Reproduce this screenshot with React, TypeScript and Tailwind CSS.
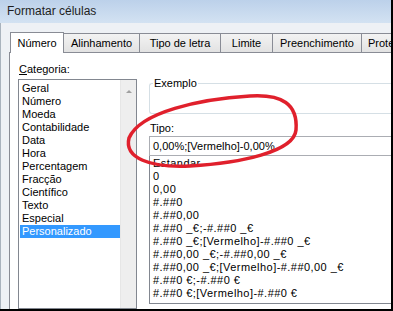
import React from "react";

const categories = [
  "Geral",
  "Número",
  "Moeda",
  "Contabilidade",
  "Data",
  "Hora",
  "Percentagem",
  "Fracção",
  "Científico",
  "Texto",
  "Especial",
  "Personalizado",
];

const types = [
  "Estandar",
  "0",
  "0,00",
  "#.##0",
  "#.##0,00",
  "#.##0 _€;-#.##0 _€",
  "#.##0 _€;[Vermelho]-#.##0 _€",
  "#.##0,00 _€;-#.##0,00 _€",
  "#.##0,00 _€;[Vermelho]-#.##0,00 _€",
  "#.##0 €;-#.##0 €",
  "#.##0 €;[Vermelho]-#.##0 €",
];

const tabs = [
  { label: "Alinhamento", w: "w-[76px]" },
  { label: "Tipo de letra", w: "w-[81px]" },
  { label: "Limite", w: "w-[52px]" },
  { label: "Preenchimento", w: "w-[89px]" },
];

export default function App() {
  return (
    <div className="relative w-[393px] h-[311px] overflow-hidden flex flex-col bg-[#f0f0f0] border-r-2 border-b-2 border-black font-['Liberation_Sans',Arial,sans-serif] text-[11px] text-black leading-[13px]">
      {/* Title bar */}
      <div className="h-[23px] shrink-0 flex items-center pl-[7px] bg-gradient-to-b from-[#bcd1ea] to-[#d3e2f2] text-[12px] text-[#1e1e1e]">
        Formatar células
      </div>
      {/* Body */}
      <div className="flex-1 flex flex-col border-l border-[#a9b3bd] bg-[#eef1f5] pl-[8px] pt-[8px] min-h-0">
        {/* Tabs */}
        <div className="flex items-end h-[21px] pl-px shrink-0 relative z-10">
          <div className="w-[54px] shrink-0 h-[21px] -mb-px bg-white border border-b-0 border-[#898c95] flex items-center justify-center">
            Número
          </div>
          {tabs.map((t) => (
            <div
              key={t.label}
              className={`${t.w} shrink-0 h-[19px] border border-l-0 border-b-0 border-[#898c95] bg-gradient-to-b from-[#f3f3f3] to-[#e2e2e2] flex items-center justify-center whitespace-nowrap`}
            >
              {t.label}
            </div>
          ))}
          <div className="w-[29px] shrink-0 h-[19px] border-t border-l-0 border-[#898c95] bg-gradient-to-b from-[#f3f3f3] to-[#e2e2e2] flex items-center pl-[6px] whitespace-nowrap overflow-hidden">
            Prote
          </div>
        </div>
        {/* Panel */}
        <div className="flex-1 bg-white border-l border-t border-[#898c95] flex pl-[8px] min-h-0">
          {/* Left column */}
          <div className="w-[119px] shrink-0 flex flex-col pt-[10px]">
            <div className="h-[14px] pl-px">
              <span className="underline">C</span>ategoria:
            </div>
            <div className="mt-[2px] flex-1 border border-[#828790] flex">
              <div className="flex-1 flex flex-col pt-[2px] pl-px">
                {categories.map((c) => (
                  <div
                    key={c}
                    className={`h-[13px] pl-[2px] whitespace-nowrap ${
                      c === "Personalizado" ? "bg-[#3399ff] text-white" : ""
                    }`}
                  >
                    {c}
                  </div>
                ))}
              </div>
              <div className="w-[16px] bg-[#eeeeee] border-l border-[#e6e6e6] flex flex-col items-center">
                <svg width="16" height="17" viewBox="0 0 16 17" className="mt-[3px]">
                  <path d="M5 10 L8 7 L11 10 Z" fill="#a0a0a0" />
                </svg>
              </div>
            </div>
          </div>
          {/* Right column */}
          <div className="flex-1 flex flex-col ml-[12px] pt-[30px] min-w-0 pb-[5px]">
            {/* Exemplo group */}
            <div className="relative h-[31px] border border-r-0 border-[#d5dfe5] rounded-l-[3px] shrink-0 mr-[-10px]">
              <span className="absolute -top-[7px] left-[3px] bg-white px-px">Exemplo</span>
            </div>
            <div className="mt-[8px] h-[14px] pl-px">Tipo:</div>
            <div className="h-[20px] border border-r-0 border-[#abadb3] flex items-center pl-[3px] mr-[-10px] whitespace-nowrap">
              0,00%;[Vermelho]-0,00%
            </div>
            <div className="flex-1 border border-t-0 border-r-0 border-[#828790] pl-[3px] pt-px mr-[-10px] tracking-[0.45px]">
              {types.map((t) => (
                <div key={t} className="h-[13px] whitespace-nowrap">
                  {t}
                </div>
              ))}
            </div>
          </div>
        </div>
      </div>
      {/* Red annotation ellipse */}
      <svg
        className="absolute left-0 top-0 pointer-events-none"
        width="393"
        height="311"
        viewBox="0 0 393 311"
      >
        <path
          d="M 296 130 C 298 104 282 94 250 96 C 200 99 140 112 129 138 C 124 158 150 168 190 166 C 240 163 294 152 296 130 Z"
          fill="none"
          stroke="#e0202c"
          strokeWidth="3.5"
        />
      </svg>
    </div>
  );
}
